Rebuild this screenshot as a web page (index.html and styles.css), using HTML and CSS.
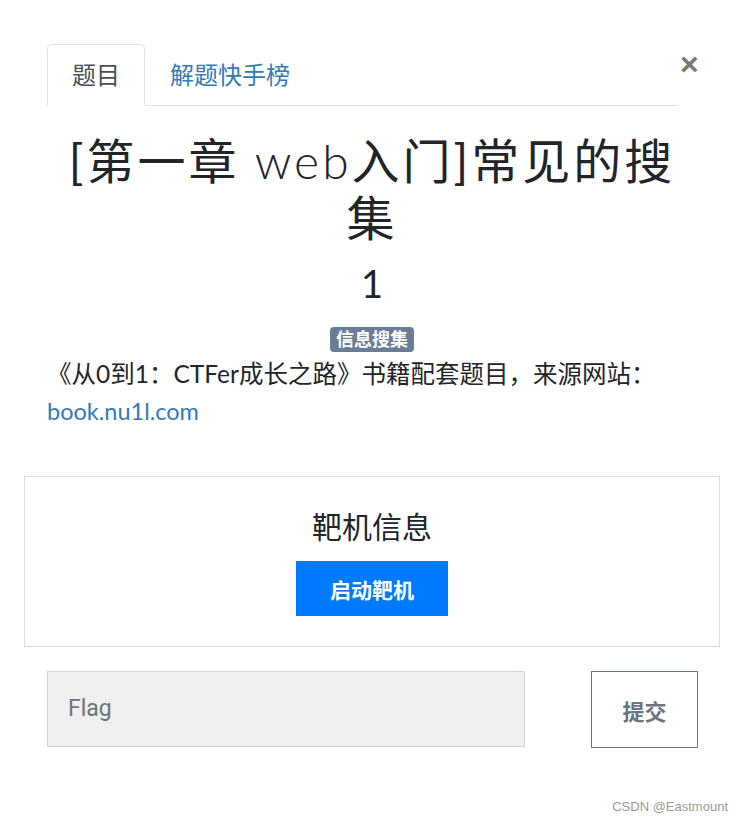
FILE: index.html
```html
<!DOCTYPE html>
<html lang="zh">
<head>
<meta charset="utf-8">
<title>题目</title>
<link rel="stylesheet" href="styles.css">
</head>
<body>
<div class="page">
  <div class="header">
    <ul class="tabs">
      <li class="tab active">题目</li>
      <li class="tab link">解题快手榜</li>
    </ul>
    <span class="close">×</span>
  </div>
  <h1 class="title">[第一章 <span class="latin">web</span>入门]常见的搜集</h1>
  <div class="score">1</div>
  <div class="badge-row"><span class="badge">信息搜集</span></div>
  <div class="desc">
    <p>《从0到1：CTFer成长之路》书籍配套题目，来源网站：<a class="url" href="#">book.nu1l.com</a></p>
  </div>
  <div class="target">
    <div class="target-title">靶机信息</div>
    <button class="start">启动靶机</button>
  </div>
  <div class="flag-row">
    <div class="flag-input">Flag</div>
    <button class="submit">提交</button>
  </div>
</div>
<div class="watermark">CSDN @Eastmount</div>
</body>
</html>
```
FILE: styles.css
```css
* { box-sizing: border-box; }
html, body { margin: 0; padding: 0; background: #fff; }
body {
  font-family: Lato, "Noto Sans CJK SC", sans-serif;
  color: #212529;
  width: 743px;
  height: 821px;
  position: relative;
  overflow: hidden;
}
.page { padding: 44px 23px 0 24px; }
.header { display: flex; align-items: flex-start; margin-left: 23px; }
.tabs {
  list-style: none; margin: 0; padding: 0;
  display: flex; width: 631px;
  border-bottom: 1px solid #dee2e6;
}
.tab {
  font-size: 24px; line-height: 36px;
  padding: 12px 24px 12px 24px;
  border: 1px solid transparent;
  border-radius: 5px 5px 0 0;
  margin-bottom: -1px;
}
.tab.active { color: #495057; border-color: #dee2e6 #dee2e6 #fff; background: #fff; }
.tab.link { color: #337ab7; }
.close {
  font-family: "Liberation Sans", sans-serif;
  font-size: 32px; font-weight: bold; color: #777;
  line-height: 32px; margin-left: 2px; margin-top: 4px;
}
.title {
  margin: 26px 0 0; text-align: center;
  font-weight: 400; font-size: 48px; line-height: 57px;
  padding: 0 40px; letter-spacing: 3px;
}
.latin { font-weight: 300; letter-spacing: 3px; }
.score { text-align: center; font-size: 38px; font-weight: 400; line-height: 43px; margin-top: 16px; }
.badge-row { text-align: center; margin-top: 22px; line-height: 25px; height: 25px; }
.badge {
  display: inline-block; background: #6a7c96; color: #fff;
  font-weight: bold; font-size: 18px; line-height: 25px;
  padding: 0 6px; border-radius: 4px;
}
.desc { padding: 0 23px; margin-top: 3px; }
.desc p { margin: 0; font-size: 24.5px; line-height: 37px; }
.url { color: #337ab7; text-decoration: none; font-size: 23.5px; }
.target {
  margin-top: 46px; border: 1px solid #dddddd;
  padding: 31px 0 30px; text-align: center;
}
.target-title { font-size: 30px; line-height: 36px; }
.start {
  margin-top: 17px; width: 152px; height: 55px;
  background: #007bff; color: #fff; border: none;
  font-family: inherit; font-weight: bold; font-size: 21px;
}
.flag-row { display: flex; margin-top: 24px; padding: 0 22px 0 23px; align-items: flex-start; }
.flag-input {
  width: 478px; height: 76px; background: #efefef;
  border: 1px solid #ced4da; color: #6c757d;
  font-family: Roboto, "Noto Sans CJK SC", sans-serif; font-size: 23px;
  padding: 0 20px; line-height: 74px;
}
.submit {
  margin-left: auto; width: 107px; height: 77px;
  background: #fff; border: 1px solid #6c757d; color: #6c757d;
  font-family: inherit; font-weight: bold; font-size: 22px;
}
.watermark {
  position: absolute; right: 15px; bottom: 7px;
  font-family: "Liberation Sans", sans-serif; font-size: 13px; color: #999;
}
```
